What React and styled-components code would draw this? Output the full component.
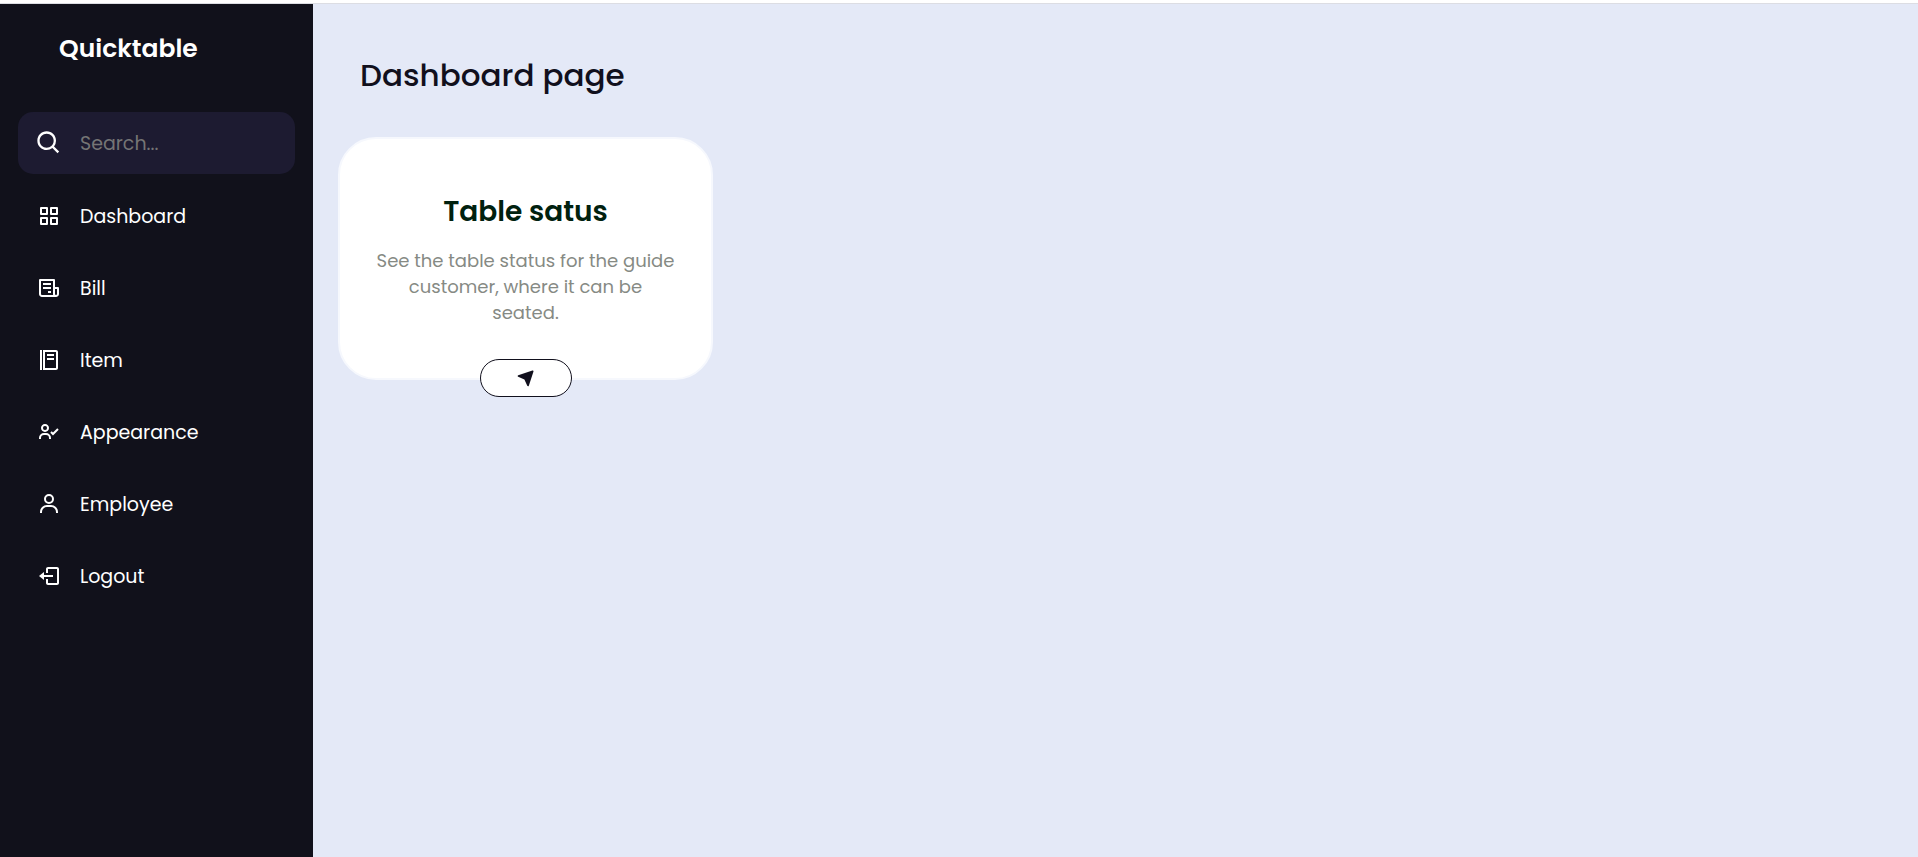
import React from "react";
import styled, { createGlobalStyle } from "styled-components";
import {
  BiSearch,
  BiGridAlt,
  BiReceipt,
  BiFoodMenu,
  BiUserCheck,
  BiUser,
  BiLogOut,
  BiSolidNavigation,
} from "react-icons/bi";

const GlobalStyle = createGlobalStyle`
  * {
    box-sizing: border-box;
    margin: 0;
    padding: 0;
  }

  body {
    background: #ffffff;
    font-family: Poppins, Inter, "Liberation Sans", sans-serif;
  }
`;

const Page = styled.div`
  display: flex;
  flex-direction: column;
  min-height: 100vh;
  padding-top: 3px;
`;

const Shell = styled.div`
  display: flex;
  flex: 1;
  border-top: 1px solid #dcdde3;
`;

const Sidebar = styled.aside`
  flex: 0 0 313px;
  min-width: 0;
  padding: 8px 18px;
  background: #11111b;
  color: #ffffff;
`;

const Brand = styled.div`
  display: flex;
  align-items: center;
  height: 74px;
  margin-bottom: 26px;
  padding-left: 41px;
  font-size: 25px;
  font-weight: 600;
`;

const IconSlot = styled.span`
  display: flex;
  flex: 0 0 62px;
  align-items: center;
  justify-content: center;
`;

const SearchBox = styled.label`
  display: flex;
  align-items: center;
  height: 62px;
  margin-bottom: 11px;
  border-radius: 15px;
  background: #1d1b31;
`;

const SearchInput = styled.input`
  flex: 1;
  width: 100%;
  min-width: 0;
  border: 0;
  outline: 0;
  background: transparent;
  color: #ffffff;
  font: inherit;
  font-size: 19px;

  &::placeholder {
    color: #757575;
  }
`;

const NavList = styled.ul`
  display: flex;
  flex-direction: column;
  gap: 10px;
  list-style: none;
`;

const NavLink = styled.a`
  display: flex;
  align-items: center;
  height: 62px;
  border-radius: 15px;
  color: #ffffff;
  font-size: 19px;
  text-decoration: none;
`;

const Main = styled.main`
  flex: 1;
  min-width: 0;
  padding: 47px 25px;
  background: #e4e9f7;
`;

const PageTitle = styled.h1`
  margin-bottom: 38px;
  padding-left: 22px;
  color: #11101d;
  font-size: 31px;
  font-weight: 500;
  line-height: 48px;
`;

const Card = styled.section`
  display: flex;
  flex-direction: column;
  align-items: center;
  width: 375px;
  max-width: 100%;
  padding: 53px 36px 0;
  border: 2px solid #f6f8fd;
  border-radius: 38px;
  background: #ffffff;
  text-align: center;
`;

const CardTitle = styled.h2`
  margin-bottom: 16px;
  color: #00210f;
  font-size: 28px;
  font-weight: 600;
  line-height: 40px;
`;

const CardText = styled.p`
  margin-bottom: 33px;
  color: #868a84;
  font-size: 18px;
  line-height: 26px;
`;

const CardButton = styled.button`
  display: flex;
  align-items: center;
  justify-content: center;
  width: 92px;
  height: 38px;
  margin-bottom: -19px;
  border: 1px solid #11101d;
  border-radius: 19px;
  background: #ffffff;
  color: #11101d;
`;

const links = [
  { label: "Dashboard", Icon: BiGridAlt },
  { label: "Bill", Icon: BiReceipt },
  { label: "Item", Icon: BiFoodMenu },
  { label: "Appearance", Icon: BiUserCheck },
  { label: "Employee", Icon: BiUser },
  { label: "Logout", Icon: BiLogOut },
];

export default function App() {
  return (
    <Page>
      <GlobalStyle />
      <Shell>
        <Sidebar>
          <Brand>Quicktable</Brand>
          <SearchBox>
            <IconSlot>
              <BiSearch size={28} />
            </IconSlot>
            <SearchInput type="text" placeholder="Search..." aria-label="Search" />
          </SearchBox>
          <nav>
            <NavList>
              {links.map(({ label, Icon }) => (
                <li key={label}>
                  <NavLink href="#">
                    <IconSlot>
                      <Icon size={24} />
                    </IconSlot>
                    {label}
                  </NavLink>
                </li>
              ))}
            </NavList>
          </nav>
        </Sidebar>
        <Main>
          <PageTitle>Dashboard page</PageTitle>
          <Card>
            <CardTitle>Table satus</CardTitle>
            <CardText>See the table status for the guide customer, where it can be seated.</CardText>
            <CardButton type="button" aria-label="Open table status">
              <BiSolidNavigation size={20} />
            </CardButton>
          </Card>
        </Main>
      </Shell>
    </Page>
  );
}
